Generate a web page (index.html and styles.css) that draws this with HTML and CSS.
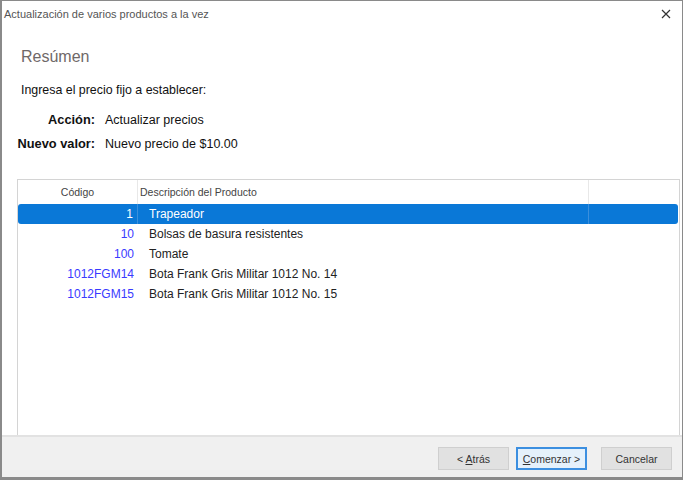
FILE: index.html
```html
<!DOCTYPE html>
<html>
<head>
<meta charset="utf-8">
<link rel="stylesheet" href="styles.css">
</head>
<body>
<div class="window">
  <div class="titlebar">
    <span class="title">Actualización de varios productos a la vez</span>
    <svg class="close" width="10" height="10" viewBox="0 0 10 10"><path d="M1 1L9 9M9 1L1 9" stroke="#333" stroke-width="1.2"/></svg>
  </div>
  <div class="content">
    <div class="heading">Resúmen</div>
    <div class="intro">Ingresa el precio fijo a establecer:</div>
    <div class="summary">
      <div class="label">Acción:</div><div class="value">Actualizar precios</div>
      <div class="label">Nuevo valor:</div><div class="value">Nuevo precio de $10.00</div>
    </div>
    <div class="list">
      <div class="list-head">
        <div class="col-code">Código</div>
        <div class="col-desc">Descripción del Producto</div>
        <div class="col-rest"></div>
      </div>
      <div class="row selected"><div class="code">1</div><div class="desc">Trapeador</div><div class="rest"></div></div>
      <div class="row"><div class="code">10</div><div class="desc">Bolsas de basura resistentes</div><div class="rest"></div></div>
      <div class="row"><div class="code">100</div><div class="desc">Tomate</div><div class="rest"></div></div>
      <div class="row"><div class="code">1012FGM14</div><div class="desc">Bota Frank Gris Militar 1012 No. 14</div><div class="rest"></div></div>
      <div class="row"><div class="code">1012FGM15</div><div class="desc">Bota Frank Gris Militar 1012 No. 15</div><div class="rest"></div></div>
    </div>
  </div>
  <div class="footer">
    <button class="btn">&lt; <u>A</u>trás</button>
    <button class="btn focus"><u>C</u>omenzar &gt;</button>
    <button class="btn cancel">Cancelar</button>
  </div>
</div>
</body>
</html>
```
FILE: styles.css
```css
* { box-sizing: border-box; }
html, body { margin: 0; padding: 0; background: #fff; }
body { font-family: "Liberation Sans", Arial, sans-serif; }
.window {
  width: 683px; height: 480px;
  border: 1px solid #8a8a8a;
  border-left-width: 2px;
  border-bottom-width: 3px;
  display: flex; flex-direction: column;
  background: #fff;
}
.titlebar {
  height: 26px; display: flex; align-items: center;
  padding: 0 11px 0 2px;
  justify-content: space-between;
}
.title { font-size: 11px; color: #555; }
.close { display: block; }
.content { flex: 1; display: flex; flex-direction: column; padding: 0 2px 0 15px; }
.heading { font-size: 16px; color: #6f6868; margin: 20px 0 0 4px; line-height: 20px; }
.intro { font-size: 12.4px; color: #111; margin: 16px 0 0 4px; line-height: 14px; }
.summary {
  display: grid; grid-template-columns: 78px auto; column-gap: 10px; row-gap: 10px;
  margin-top: 16px; font-size: 12.5px; color: #111; line-height: 14px;
}
.label { font-weight: bold; text-align: right; font-size: 12.8px; }
.list {
  margin-top: 28px; flex: 1;
  border: 1px solid #d4d4d4; border-bottom: none;
  font-size: 11px;
}
.list-head { display: flex; height: 24px; color: #444; font-size: 10.5px; }
.col-code { width: 120px; text-align: center; line-height: 24px; border-right: 1px solid #e8e8e8; }
.col-desc { width: 451px; padding-left: 2px; line-height: 24px; border-right: 1px solid #e8e8e8; }
.col-rest { flex: 1; }
.row { display: flex; height: 20px; line-height: 20px; font-size: 12px; color: #222; margin-right: 1px; }
.row .code { width: 120px; text-align: right; padding-right: 4px; color: #3a3aff; }
.row .desc { width: 451px; padding-left: 11px; }
.row .rest { flex: 1; }
.row.selected { background: #0a78d7; color: #fff; border-radius: 3px; }
.row.selected .code { color: #fff; border-right: 1px solid #3b8fdc; }
.row.selected .desc { border-right: 1px solid #3b8fdc; }
.footer {
  height: 42px; background: #f0f0f0; border-top: 2px solid #e2e2e2;
  display: flex; justify-content: flex-end; align-items: flex-start;
  padding: 10px 10px 0 0; gap: 7px;
}
.btn {
  width: 71px; height: 23px; font-family: "Liberation Sans", Arial, sans-serif;
  font-size: 10.5px; color: #333; background: #e1e1e1; border: 1px solid #cfcfcf; padding: 0;
}
.btn u { text-decoration: underline; }
.btn.focus { border: 2px solid #3c8fe0; background: #e5f1fb; }
.btn.cancel { margin-left: 7px; }
```
